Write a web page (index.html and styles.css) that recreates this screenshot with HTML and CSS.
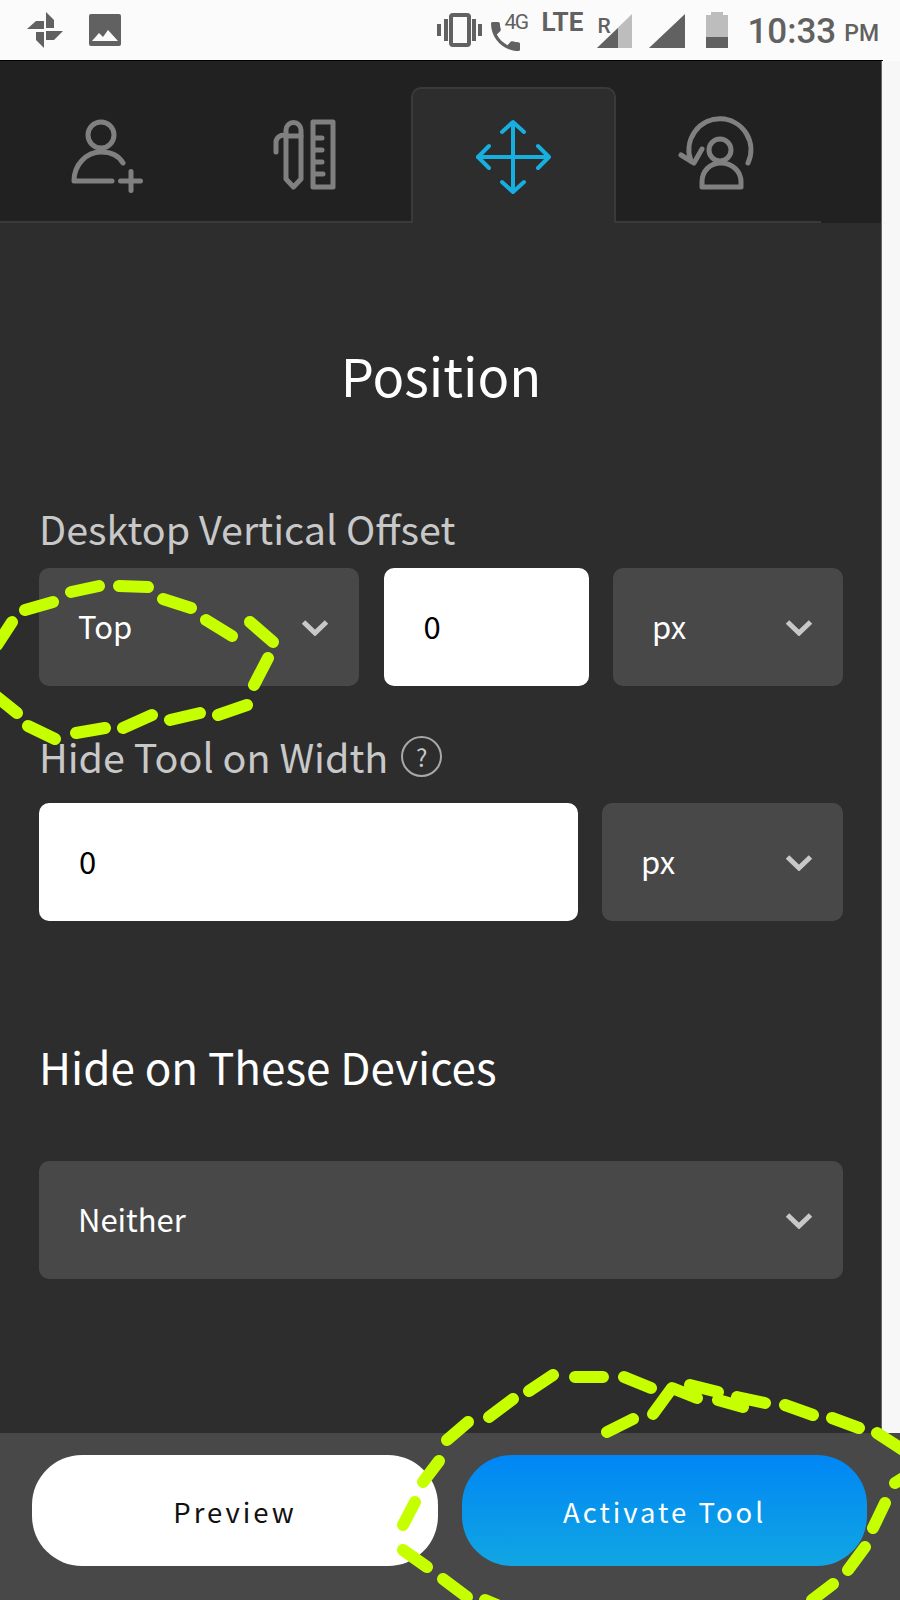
FILE: index.html
```html
<!DOCTYPE html>
<html lang="en">
<head>
    <meta charset="UTF-8">
    <meta name="viewport" content="width=device-width, initial-scale=1.0">
    <title>Position</title>
    <link rel="stylesheet" href="styles.css">
</head>
<body>
    <div class="status-bar">
        <svg class="status-pinwheel" viewBox="27 12 36 36" fill="#616161">
            <path d="M46 12L54 20V28H46Z"/>
            <path d="M27 29L36 21H44V29Z"/>
            <path d="M63 31L54 40H46V31Z"/>
            <path d="M44 48L36 40V32H44Z"/>
        </svg>
        <svg class="status-image" viewBox="89 14 32 32">
            <rect x="89" y="14" width="32" height="32" rx="2" fill="#616161"/>
            <path d="M92 41L99 33L103 37L108 30L118 41Z" fill="#fbfbfb"/>
        </svg>
        <div class="status-right">
            <svg class="status-vibrate" viewBox="438 12 45 36" fill="#616161">
                <rect x="438" y="24" width="4" height="12"/>
                <rect x="445" y="19" width="4" height="22"/>
                <rect x="452" y="15" width="18" height="30" rx="2" fill="none" stroke="#616161" stroke-width="4"/>
                <rect x="473" y="19" width="4" height="22"/>
                <rect x="479" y="24" width="4" height="12"/>
            </svg>
            <svg class="status-call" viewBox="3 3 18 18" fill="#616161">
                <path d="M6.62 10.79c1.44 2.83 3.76 5.14 6.59 6.59l2.2-2.2c.27-.27.67-.36 1.02-.24 1.12.37 2.33.57 3.57.57.55 0 1 .45 1 1V20c0 .55-.45 1-1 1-9.39 0-17-7.61-17-17 0-.55.45-1 1-1h3.5c.55 0 1 .45 1 1 0 1.25.2 2.45.57 3.57.11.35.03.74-.25 1.02l-2.2 2.2z"/>
            </svg>
            <span class="status-4g">4G</span>
            <span class="status-lte">LTE</span>
            <span class="status-r">R</span>
            <svg class="status-signal" viewBox="598 14 35 34">
                <path d="M598 48L633 14V48Z" fill="#bdbdbd"/>
                <path d="M598 48L619 28V48Z" fill="#616161"/>
            </svg>
            <svg class="status-signal-full" viewBox="650 14 36 34">
                <path d="M650 48L686 14V48Z" fill="#616161"/>
            </svg>
            <svg class="status-battery" viewBox="707 12 22 36">
                <path d="M712 12H724V15H729V48H707V15H712Z" fill="#bdbdbd"/>
                <rect x="707" y="37" width="22" height="11" fill="#616161"/>
            </svg>
            <span class="status-time">10:33</span>
            <span class="status-ampm">PM</span>
        </div>
    </div>

    <div class="panel">
        <div class="tabs-row">
            <div class="tabs">
                <div class="tab">
                    <svg class="tab-icon" viewBox="62 115 81 80">
                        <circle cx="100" cy="135" r="13"/>
                        <path d="M111 181H73C73 165 85 152 100 152C110 152 118 156 122 163"/>
                        <path d="M119.500 181H139.500M130 171.500V190.500"/>
                    </svg>
                </div>
                <div class="tab">
                    <svg class="tab-icon" viewBox="268 115 81 80">
                        <path d="M286 130V179L293.500 187L301 179V130A7.500 7.500 0 0 0 286 130Z"/>
                        <path d="M276 152V142A7 7 0 0 1 286 136H301"/>
                        <rect x="313" y="122" width="20" height="65"/>
                        <path d="M315 138H322M315 150H322M315 162H322M315 174H323"/>
                    </svg>
                </div>
                <div class="tab tab-active">
                    <svg class="tab-icon" viewBox="473 115 81 80">
                        <path d="M513 123V191M478 157H548"/>
                        <path d="M502 132L513 122L524 132M502 182L513 192L524 182"/>
                        <path d="M489 146L478 157L489 168M538 146L549 157L538 168"/>
                    </svg>
                </div>
                <div class="tab">
                    <svg class="tab-icon" viewBox="678 115 81 80">
                        <path d="M748 163A31 31 0 1 0 691 161"/>
                        <path d="M681 155L694 163L702 149"/>
                        <circle cx="720" cy="150" r="11"/>
                        <path d="M702 187V182C702 171 710 163 721 163C732 163 741 171 741 182V187Z"/>
                    </svg>
                </div>
            </div>
        </div>

        <div class="panel-body">
            <h1 class="panel-title">Position</h1>

            <div class="field-label label-first">Desktop Vertical Offset</div>
            <div class="field-row row-offset">
                <div class="select">
                    <span>Top</span>
                    <svg class="chevron" viewBox="0 0 28 17"><path d="M2.500 3L14 14L25.500 3"/></svg>
                </div>
                <div class="text-input">0</div>
                <div class="select">
                    <span>px</span>
                    <svg class="chevron" viewBox="0 0 28 17"><path d="M2.500 3L14 14L25.500 3"/></svg>
                </div>
            </div>

            <div class="field-label label-second">
                Hide Tool on Width
                <span class="help">?</span>
            </div>
            <div class="field-row row-width">
                <div class="text-input">0</div>
                <div class="select">
                    <span>px</span>
                    <svg class="chevron" viewBox="0 0 28 17"><path d="M2.500 3L14 14L25.500 3"/></svg>
                </div>
            </div>

            <h2 class="section-title">Hide on These Devices</h2>
            <div class="select select-wide">
                <span>Neither</span>
                <svg class="chevron" viewBox="0 0 28 17"><path d="M2.500 3L14 14L25.500 3"/></svg>
            </div>
        </div>
    </div>

    <div class="footer-bar">
        <button class="btn btn-preview">Preview</button>
        <button class="btn btn-activate">Activate Tool</button>
    </div>

    <!-- hand drawn dashes from the annotated screenshot -->
    <svg class="scribble" viewBox="0 0 900 1600">
        <path d="M-3 645L12 622M25 610L53 602M71 592L99 586M119 586L148 587M163 599L191 608M206 620L232 636M250 622L273 642M268 658L254 685M247 705L218 715M200 713L170 720M152 715L123 728M105 728L76 733M55 739L28 726M17 713L-3 697"/>
        <path d="M468 1422L447 1440M513 1399L489 1417M553 1375L529 1391M575 1377H603M624 1377L651 1388M607 1432L633 1419M653 1414L672 1388L697 1398M690 1385L718 1392M718 1400L743 1407M737 1397L765 1403M785 1405L813 1415M832 1418L859 1428M877 1433L903 1450M895 1483L903 1478M885 1503L873 1528M865 1547L848 1570M833 1584L812 1600"/>
        <path d="M439 1461L423 1482M415 1502L403 1525M403 1550L427 1567M443 1579L467 1597M485 1600L497 1605"/>
    </svg>
</body>
</html>
```

FILE: styles.css
```css
* {
    box-sizing: border-box;
}

body {
    font-family: "Noto Sans CJK SC", "Noto Sans", sans-serif;
    margin: 0;
    width: 900px;
    height: 1600px;
    position: relative;
    overflow: hidden;
    display: flex;
    flex-direction: column;
    background-color: #f7f7f7;
}

/* status bar */
.status-bar {
    height: 61px;
    flex: none;
    display: flex;
    align-items: center;
    padding: 0 21px 1px 27px;
    background: #fbfbfb;
    border-bottom: 1px solid #000;
    border-image: linear-gradient(to right, #000 882px, #fbfbfb 882px) 1;
    font-family: Roboto, sans-serif;
    color: #616161;
}

.status-bar svg {
    display: block;
}

.status-pinwheel {
    width: 36px;
    height: 36px;
}

.status-image {
    width: 32px;
    height: 32px;
    margin-left: 26px;
}

.status-right {
    margin-left: auto;
    display: flex;
    align-items: center;
    height: 60px;
}

.status-vibrate {
    width: 45px;
    height: 36px;
}

.status-call {
    width: 29px;
    height: 29px;
    margin: 10px 0 -4px 9px;
}

.status-4g {
    font-size: 21px;
    width: 23px;
    letter-spacing: -1.5px;
    margin: -15px 0 0 -16px;
}

.status-lte {
    font-size: 26px;
    font-weight: 700;
    width: 43px;
    margin: -15px 0 0 14px;
}

.status-r {
    font-size: 21px;
    font-weight: 500;
    margin: -8px 0 0 13px;
    width: 0;
}

.status-signal {
    width: 35px;
    height: 34px;
    margin: 2px 0 0 0;
}

.status-signal-full {
    width: 36px;
    height: 34px;
    margin: 2px 0 0 17px;
}

.status-battery {
    width: 22px;
    height: 36px;
    margin-left: 21px;
}

.status-time {
    font-size: 35px;
    font-weight: 500;
    margin: 3px 0 0 19px;
}

.status-ampm {
    font-size: 23px;
    font-weight: 500;
    margin: 8px 0 0 8px;
}

/* main panel */
.panel {
    flex: 1;
    width: 882px;
    background: #2d2d2d;
    border-right: 1px solid #666;
}

.tabs-row {
    background: #212121;
    height: 162px;
    padding-top: 26px;
}

.tabs {
    width: 821px;
    height: 136px;
    display: grid;
    grid-template-columns: 206px 205px 205px 205px;
}

.tab {
    border-bottom: 2px solid #3a3a3a;
    padding-top: 28px;
    display: flex;
    justify-content: center;
    align-items: flex-start;
}

.tab-active {
    background: #2d2d2d;
    border: 2px solid #3a3a3a;
    border-bottom: none;
    border-radius: 10px 10px 0 0;
    padding-top: 26px;
}

.tab-icon {
    width: 81px;
    height: 80px;
    overflow: visible;
    fill: none;
    stroke: #808080;
    stroke-width: 5;
    stroke-linecap: round;
    stroke-linejoin: round;
}

.tab-active .tab-icon {
    stroke: #17aee0;
    stroke-width: 4;
}

.panel-body {
    padding: 0 38px 0 39px;
}

.panel-title {
    margin: 116px 0 0;
    text-align: center;
    font-size: 52.5px;
    line-height: 70px;
    font-weight: 400;
    color: #fff;
}

.field-label {
    font-size: 39.5px;
    line-height: 52px;
    color: #c8c8c8;
    display: flex;
    align-items: center;
}

.label-first {
    margin-top: 93px;
}

.label-second {
    margin-top: 44px;
}

.help {
    width: 41px;
    height: 41px;
    margin-left: 13px;
    border: 2px solid #a8a8a8;
    border-radius: 50%;
    font-size: 24px;
    line-height: 37px;
    text-align: center;
}

.field-row {
    display: grid;
    column-gap: 24.5px;
    height: 118px;
}

.row-offset {
    margin-top: 14px;
    grid-template-columns: 320px 205px 230px;
}

.row-width {
    margin-top: 21px;
    grid-template-columns: 539px 241px;
    column-gap: 24px;
}

.select,
.text-input {
    display: flex;
    align-items: center;
    height: 118px;
    padding-left: 39px;
    padding-bottom: 3px;
    border-radius: 10px;
    font-size: 31px;
}

.select {
    justify-content: space-between;
    padding-right: 30px;
    background: #484848;
    color: #fff;
}

.text-input {
    padding-left: 40px;
    background: #fff;
    color: #000;
}

.chevron {
    width: 28px;
    height: 17px;
    margin-top: 3px;
    fill: none;
    stroke: #c8c8c8;
    stroke-width: 5;
}

.section-title {
    margin: 115px 0 0;
    font-size: 44px;
    line-height: 60px;
    font-weight: 400;
    color: #fff;
}

.select-wide {
    margin-top: 65px;
}

/* bottom buttons */
.footer-bar {
    flex: none;
    height: 167px;
    background: #484848;
    padding: 22px 33px 0 32px;
    display: flex;
    gap: 24px;
}

.btn {
    width: 405px;
    height: 111px;
    border: none;
    border-radius: 50px;
    font-family: "Noto Sans CJK SC", "Noto Sans", sans-serif;
    font-size: 27.5px;
    letter-spacing: 3px;
}

.btn-preview {
    width: 406px;
    background: #fff;
    color: #111;
}

.btn-activate {
    background: linear-gradient(to bottom, #0086f5, #11a6e2);
    color: #fff;
}

/* annotation on top of the page */
.scribble {
    position: absolute;
    left: 0;
    top: 0;
    width: 900px;
    height: 1600px;
    fill: none;
    stroke: #c6ff00;
    stroke-width: 12;
    stroke-linecap: round;
    stroke-linejoin: round;
}
```
